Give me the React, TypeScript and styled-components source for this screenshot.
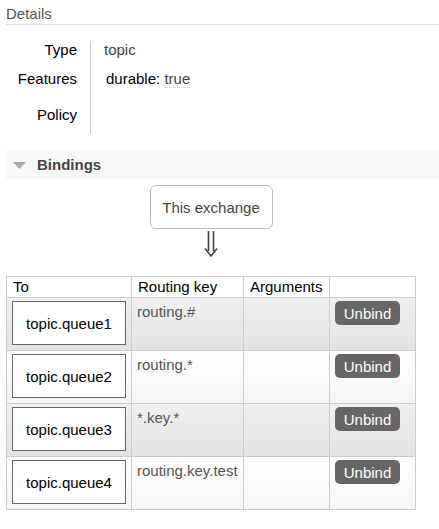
import * as React from 'react'
import styled, { createGlobalStyle } from 'styled-components'

const GlobalStyle = createGlobalStyle`
  html, body {
    margin: 0;
    padding: 0;
    background: #fff;
  }
  body {
    font-family: "Liberation Sans", Arial, sans-serif;
    font-size: 15px;
    color: #000;
  }
`

interface Binding {
  queue: string
  routingKey: string
}

const bindings: Binding[] = [
  { queue: 'topic.queue1', routingKey: 'routing.#' },
  { queue: 'topic.queue2', routingKey: 'routing.*' },
  { queue: 'topic.queue3', routingKey: '*.key.*' },
  { queue: 'topic.queue4', routingKey: 'routing.key.test' },
]

const App: React.FC = () => (
  <Page>
    <GlobalStyle />
    <SectionTitle>Details</SectionTitle>
    <DetailsGrid>
      <DetailLabel $pad={0}>Type</DetailLabel>
      <DetailValue $pad={0}>topic</DetailValue>
      <DetailLabel $pad={6}>Features</DetailLabel>
      <DetailValue $pad={6}>
        <Feature>
          durable: <Dotted>true</Dotted>
        </Feature>
      </DetailValue>
      <DetailLabel $pad={13} $last>Policy</DetailLabel>
      <DetailValue $pad={13} $last />
    </DetailsGrid>

    <Collapsible>
      <Triangle width="13" height="7" viewBox="0 0 13 7">
        <polygon points="0,0 13,0 6.5,7" fill="#a9a9a9" />
      </Triangle>
      <CollapsibleTitle>Bindings</CollapsibleTitle>
    </Collapsible>

    <BindingsBody>
      <ExchangeBox>This exchange</ExchangeBox>
      <Arrow width="14" height="26" viewBox="0 0 14 26">
        <path
          d="M4.5 0 V20 M9.5 0 V20 M1 17.5 L7 25 L13 17.5"
          fill="none"
          stroke="#444"
          strokeWidth="1.6"
          strokeLinejoin="miter"
        />
      </Arrow>
      <BindingsTable>
        <colgroup>
          <col style={{ width: 125 }} />
          <col style={{ width: 112 }} />
          <col style={{ width: 86 }} />
          <col style={{ width: 86 }} />
        </colgroup>
        <thead>
          <tr>
            <Th>To</Th>
            <Th>Routing key</Th>
            <Th>Arguments</Th>
            <Th />
          </tr>
        </thead>
        <tbody>
          {bindings.map((b, i) => (
            <Row key={b.queue} $alt={i % 2 === 0}>
              <Td>
                <QueueBox>{b.queue}</QueueBox>
              </Td>
              <Td>
                <KeyText>{b.routingKey}</KeyText>
              </Td>
              <Td />
              <Td>
                <UnbindButton>Unbind</UnbindButton>
              </Td>
            </Row>
          ))}
        </tbody>
      </BindingsTable>
    </BindingsBody>
  </Page>
)

const Page = styled.div`
  padding: 0 0 0 6px;
`

const SectionTitle = styled.h2`
  margin: 0;
  height: 24px;
  line-height: 27px;
  font-size: 15px;
  font-weight: normal;
  color: #555;
  border-bottom: 1px solid #e0e0e0;
`

const DetailsGrid = styled.div`
  display: grid;
  grid-template-columns: 85px 1fr;
  margin-top: 16px;
`

const DetailLabel = styled.div<{ $pad: number; $last?: boolean }>`
  padding: ${(p) => p.$pad}px 13px ${(p) => (p.$last ? 10 : 5)}px 0;
  line-height: 18px;
  text-align: right;
  border-right: 1px solid #ccc;
`

const DetailValue = styled.div<{ $pad: number; $last?: boolean }>`
  padding: ${(p) => p.$pad}px 0 ${(p) => (p.$last ? 10 : 5)}px 13px;
  line-height: 18px;
  color: #444;
`

const Feature = styled.span`
  padding-left: 2px;
  color: #000;
`

const Dotted = styled.span`
  color: #444;
  border-bottom: 1px dotted #ccc;
`

const Collapsible = styled.div`
  display: flex;
  align-items: center;
  gap: 11px;
  height: 29px;
  margin-top: 16px;
  padding-left: 7px;
  background: #f8f8f8;
`

const Triangle = styled.svg`
  display: block;
  margin-top: 1px;
`

const CollapsibleTitle = styled.span`
  font-weight: bold;
  color: #444;
`

const BindingsBody = styled.div`
  width: 410px;
  display: flex;
  flex-direction: column;
  align-items: center;
  padding-top: 6px;
`

const ExchangeBox = styled.div`
  width: 121px;
  height: 42px;
  display: flex;
  align-items: center;
  justify-content: center;
  border: 1px solid #bbb;
  border-radius: 6px;
  color: #444;
`

const Arrow = styled.svg`
  display: block;
  margin: 2px 0 19px;
`

const BindingsTable = styled.table`
  width: 410px;
  border-collapse: collapse;
  table-layout: fixed;
  align-self: flex-start;
`

const Th = styled.th`
  height: 20px;
  padding: 0 6px;
  text-align: left;
  font-weight: normal;
  border: 1px solid #ccc;
  line-height: 20px;
`

const Row = styled.tr<{ $alt: boolean }>`
  background: ${(p) =>
    p.$alt
      ? 'linear-gradient(to bottom, #f1f1f1 0%, #e2e2e2 100%)'
      : 'linear-gradient(to bottom, #ffffff 0%, #f5f5f5 100%)'};
`

const Td = styled.td`
  padding: 3px 5px 5px;
  vertical-align: top;
  border: 1px solid #ccc;
`

const QueueBox = styled.div`
  width: 112px;
  height: 42px;
  display: flex;
  align-items: center;
  justify-content: center;
  border: 1px solid #666;
  background: #fff;
`

const KeyText = styled.div`
  color: #555;
  line-height: 18px;
  padding-top: 2px;
`

const UnbindButton = styled.button`
  display: block;
  width: 65px;
  height: 24px;
  padding: 0;
  border: none;
  border-radius: 5px;
  background: #666;
  color: #fff;
  font-family: "Liberation Sans", Arial, sans-serif;
  font-size: 15px;
`

export default App
